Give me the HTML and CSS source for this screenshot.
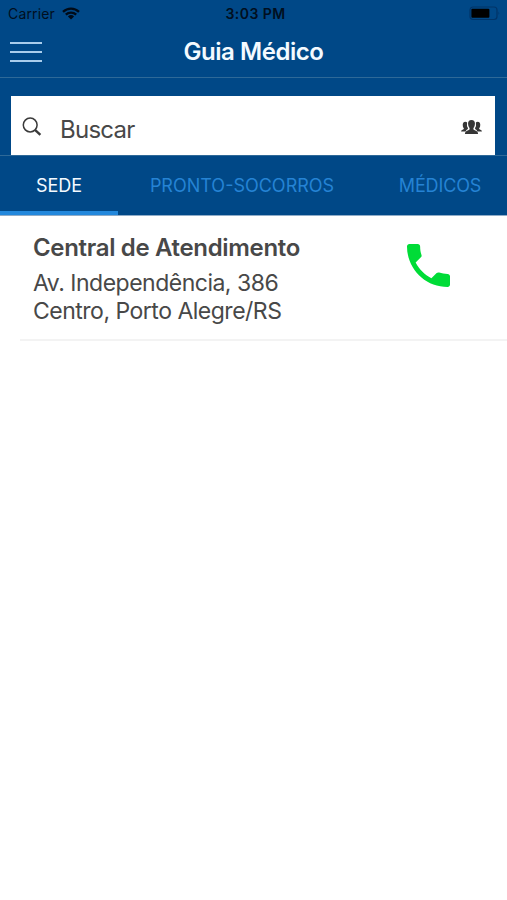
FILE: index.html
```
<!DOCTYPE html>
<html lang="pt-BR">
<head>
    <meta charset="UTF-8">
    <title>Guia Médico</title>
    <link rel="stylesheet" href="styles.css">
</head>
<body>
    <header class="header">
        <!-- status bar -->
        <div class="status-bar">
            <div class="carrier">
                <span class="carrier-name">Carrier</span>
                <svg class="wifi" width="18" height="13" viewBox="0 0 18 13">
                    <path d="M1 4.8a11.6 11.6 0 0 1 16 0M3.8 7.7a7.6 7.6 0 0 1 10.4 0" fill="none" stroke="#000b18" stroke-width="2.3"/>
                    <path d="M9 12.4 5.9 9.4a4.5 4.5 0 0 1 6.2 0z" fill="#000b18"/>
                </svg>
            </div>
            <span class="clock">3:03 PM</span>
            <svg class="battery" width="32" height="15" viewBox="0 0 32 15">
                <rect x="1" y="1" width="27" height="12.5" rx="3" fill="none" stroke="#003468" stroke-width="1.2"/>
                <rect x="2.4" y="2.7" width="18" height="9" rx="1" fill="#000"/>
                <path d="M29.5 5.5q1.6 1.8 0 3.6z" fill="#003468"/>
            </svg>
        </div>
        <!-- title -->
        <div class="nav-bar">
            <button class="menu-button" aria-label="Menu">
                <span></span>
                <span></span>
                <span></span>
            </button>
            <h1>Guia Médico</h1>
        </div>
    </header>

    <form class="search-area">
        <div class="search-box">
            <svg class="search-icon" width="20" height="20" viewBox="0 0 20 20" fill="none" stroke="#3a3a3a">
                <circle cx="8.2" cy="8" r="6.9" stroke-width="1.5"/>
                <path d="M13 12.8l5.400 5" stroke-width="2.400"/>
            </svg>
            <span class="placeholder">Buscar</span>
            <svg class="people-icon" width="23" height="17" viewBox="0 0 22 16" fill="#363636">
                <path d="M5.5 11.8H1q0-1.5 2-2 .8-.3.7-1-1.2-1.2-1.1-3.4Q2.8 2.5 5 2.400q1.2 0 1.8.8-.7 3.5.9 5.6-.3 1-1.2 1.4-.8.5-1 1.6z"/>
                <path d="M16.5 11.8H21q0-1.5-2-2-.8-.3-.7-1 1.2-1.2 1.1-3.4Q19.2 2.5 17 2.400q-1.2 0-1.8.8.7 3.5-.9 5.6.3 1 1.2 1.400.8.5 1 1.6z"/>
                <path d="M11 .8q3.400 0 3.3 3.7 0 2.6-1.5 4.1-.2 1.5.8 1.9 3.6 1 3.7 3.7H4.700q.1-2.700 3.700-3.700 1-.4.8-1.900Q7.700 7.100 7.700 4.500 7.600.8 11 .8z"/>
            </svg>
        </div>
    </form>

    <!-- tabs -->
    <nav class="tabs">
        <a class="tab active">SEDE</a>
        <a class="tab tab-wide">PRONTO-SOCORROS</a>
        <a class="tab tab-last">MÉDICOS</a>
    </nav>

    <main class="list">
        <div class="item">
            <div class="info">
                <h2>Central de Atendimento</h2>
                <p>Av. Independência, 386</p>
                <p>Centro, Porto Alegre/RS</p>
            </div>
            <svg class="phone" width="43" height="43" viewBox="3 3 18 18" fill="#00dc37">
                <path d="M6.62 10.79c1.44 2.83 3.76 5.14 6.59 6.59l2.2-2.2c.27-.27.67-.36 1.02-.24 1.12.37 2.33.57 3.57.57.55 0 1 .45 1 1V20c0 .55-.45 1-1 1-9.39 0-17-7.61-17-17 0-.55.45-1 1-1h3.5c.55 0 1 .45 1 1 0 1.25.2 2.45.57 3.57.11.35.03.74-.25 1.02l-2.2 2.2z"/>
            </svg>
        </div>
    </main>
</body>
</html>
```
FILE: styles.css
```
body {
    margin: 0;
    min-height: 100vh;
    overflow-x: hidden;
    font-family: Inter, 'Liberation Sans', sans-serif;
    color: #484848;
    background-color: #fff;
}

/* header */
.header {
    height: 77px;
    background-color: #004887;
    border-bottom: 1px solid #2e6998;
}

.status-bar {
    display: grid;
    grid-template-columns: 1fr auto 1fr;
    align-items: center;
    height: 27px;
    padding: 0 6px 0 8px;
    color: #000f20;
    font-size: 14px;
}

.carrier {
    display: flex;
    align-items: center;
    gap: 7px;
    letter-spacing: 0.15px;
}

.clock {
    padding-left: 2px;
    font-weight: 600;
    letter-spacing: 0.45px;
}

.battery {
    justify-self: end;
}

.nav-bar {
    display: grid;
    grid-template-columns: 32px 1fr 32px;
    align-items: center;
    height: 50px;
    padding: 0 10px;
}

.menu-button {
    display: flex;
    flex-direction: column;
    gap: 7px;
    padding: 0;
    border: none;
    background: none;
}

.menu-button span {
    width: 32px;
    height: 2px;
    background-color: #a9cdec;
}

h1 {
    margin: 0;
    color: #f4faff;
    font-size: 24px;
    font-weight: 600;
    line-height: 30px;
    letter-spacing: -0.45px;
    text-align: center;
}

/* search */
.search-area {
    padding: 18px 12px 0 11px;
    background-color: #004887;
}

.search-box {
    display: flex;
    align-items: center;
    height: 59px;
    padding: 0 12px 0 11px;
    background-color: #fff;
}

.search-icon,
.people-icon {
    padding-top: 3px;
}

.placeholder {
    flex: 1;
    margin-left: 18px;
    padding-top: 7px;
    font-size: 24px;
    letter-spacing: -0.75px;
}

/* tabs */
.tabs {
    display: flex;
    height: 59px;
    border-top: 1px solid #2e6998;
    border-bottom: 1px solid #8facc8;
    background-color: #004887;
    overflow: hidden;
}

.tab {
    box-sizing: border-box;
    flex: none;
    width: 118px;
    height: 59px;
    border-bottom: 4px solid transparent;
    color: #2583d4;
    font-size: 18px;
    line-height: 60px;
    text-align: center;
}

.tab.active {
    border-bottom-color: #2388dc;
    color: #f4faff;
}

.tab-wide {
    width: 248px;
}

.tab-last {
    width: 148px;
    letter-spacing: -0.15px;
}

/* list */
.item {
    display: flex;
    justify-content: space-between;
    box-sizing: border-box;
    height: 125px;
    margin-left: 20px;
    padding: 17px 57px 0 13px;
    border-bottom: 2px solid #f3f3f3;
}

h2 {
    margin: 0 0 6px;
    font-size: 24px;
    font-weight: 600;
    line-height: 30px;
    letter-spacing: -0.33px;
}

p {
    margin: 0;
    font-size: 23px;
    line-height: 28px;
    letter-spacing: -0.5px;
}

.phone {
    margin-top: 11px;
}
```
